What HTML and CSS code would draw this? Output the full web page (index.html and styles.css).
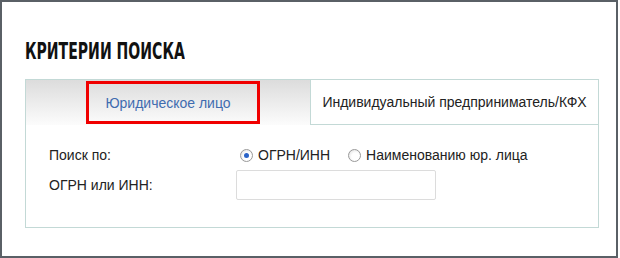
FILE: index.html
```html
<!DOCTYPE html>
<html lang="ru">
<head>
    <meta charset="UTF-8">
    <title>Критерии поиска</title>
    <link rel="stylesheet" href="styles.css">
</head>
<body>
    <div class="frame">
        <h2 class="title"><span class="title-text">КРИТЕРИИ ПОИСКА</span></h2>

        <div class="search-panel">
            <!-- Tabs -->
            <div class="tabs">
                <div class="tab tab-legal">
                    Юридическое лицо
                    <span class="highlight"></span>
                </div>
                <div class="tab tab-person">Индивидуальный предприниматель/КФХ</div>
            </div>

            <div class="search-form">
                <div class="form-row">
                    <span class="form-label">Поиск по:</span>
                    <div class="form-value radios">
                        <label class="radio-item">
                            <input type="radio" name="mode" checked>
                            ОГРН/ИНН
                        </label>
                        <label class="radio-item">
                            <input type="radio" name="mode">
                            Наименованию юр. лица
                        </label>
                    </div>
                </div>
                <div class="form-row">
                    <span class="form-label">ОГРН или ИНН:</span>
                    <div class="form-value">
                        <input type="text" class="text-input">
                    </div>
                </div>
            </div>
        </div>
    </div>
</body>
</html>
```

FILE: styles.css
```css
* {
    margin: 0;
    padding: 0;
    box-sizing: border-box;
    font-family: 'Liberation Sans', Arial, sans-serif;
}

:root {
    --frame-border: #5a6066;
    --panel-border: #c3d9d6;
    --text: #222222;
    --link: #3f6cb0;
}

body {
    background: #ffffff;
}

.frame {
    width: 618px;
    height: 258px;
    border: 2px solid var(--frame-border);
    padding: 35px 0 0 23px;
}

.title {
    height: 42px;
    line-height: 28px;
}

.title-text {
    display: inline-block;
    font-family: 'DejaVu Sans Condensed', 'Liberation Sans', sans-serif;
    font-weight: bold;
    font-size: 23px;
    color: #111111;
    transform: scaleX(0.68);
    transform-origin: left center;
}

.search-panel {
    width: 574px;
    border: 1px solid var(--panel-border);
}

.tabs {
    display: flex;
    height: 45px;
}

.tab {
    display: flex;
    align-items: center;
    justify-content: center;
    font-size: 14px;
}

.tab-legal {
    position: relative;
    width: 284px;
    color: var(--link);
    background: linear-gradient(#dcdcdc, #fcfcfc);
}

.tab-person {
    width: 288px;
    color: var(--text);
    background: #ffffff;
    border-left: 1px solid var(--panel-border);
    border-bottom: 1px solid var(--panel-border);
}

.highlight {
    position: absolute;
    left: 60px;
    top: 1px;
    width: 174px;
    height: 43px;
    border: 3px solid #f00000;
}

.search-form {
    padding: 20px 0 27px 23px;
    display: flex;
    flex-direction: column;
    gap: 5px;
}

.form-row {
    display: flex;
    align-items: center;
    min-height: 20px;
    font-size: 14px;
    color: var(--text);
}

.form-label {
    width: 187px;
}

.radios {
    display: flex;
    gap: 18px;
    padding-left: 4px;
}

.radio-item {
    display: flex;
    align-items: center;
    gap: 5px;
    cursor: pointer;
}

.radio-item input {
    appearance: none;
    width: 13px;
    height: 13px;
    border-radius: 50%;
    border: 1px solid #9a9a9a;
    background: radial-gradient(circle at 60% 60%, #ffffff 40%, #dadada 100%);
    position: relative;
}

.radio-item input:checked::after {
    content: "";
    position: absolute;
    left: 3px;
    top: 3px;
    width: 5px;
    height: 5px;
    border-radius: 50%;
    background: #2a63c8;
}

.text-input {
    width: 200px;
    height: 30px;
    border: 1px solid #dcdcdc;
    border-radius: 2px;
    font-size: 14px;
    padding: 0 6px;
}
```
